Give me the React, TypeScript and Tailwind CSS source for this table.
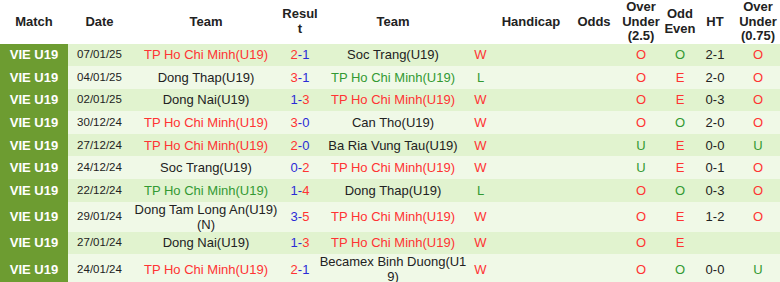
import React from "react";

type Row = {
  date: string;
  home: string;
  away: string;
  hs: number;
  as: number;
  res: "W" | "L";
  ou: string;
  oe: string;
  ht: string;
  ou2: string;
};

const MAIN = "TP Ho Chi Minh(U19)";

const rows: Row[] = [
  { date: "07/01/25", home: MAIN, away: "Soc Trang(U19)", hs: 2, as: 1, res: "W", ou: "O", oe: "O", ht: "2-1", ou2: "O" },
  { date: "04/01/25", home: "Dong Thap(U19)", away: MAIN, hs: 3, as: 1, res: "L", ou: "O", oe: "E", ht: "2-0", ou2: "O" },
  { date: "02/01/25", home: "Dong Nai(U19)", away: MAIN, hs: 1, as: 3, res: "W", ou: "O", oe: "E", ht: "0-3", ou2: "O" },
  { date: "30/12/24", home: MAIN, away: "Can Tho(U19)", hs: 3, as: 0, res: "W", ou: "O", oe: "O", ht: "2-0", ou2: "O" },
  { date: "27/12/24", home: MAIN, away: "Ba Ria Vung Tau(U19)", hs: 2, as: 0, res: "W", ou: "U", oe: "E", ht: "0-0", ou2: "U" },
  { date: "24/12/24", home: "Soc Trang(U19)", away: MAIN, hs: 0, as: 2, res: "W", ou: "U", oe: "E", ht: "0-1", ou2: "O" },
  { date: "22/12/24", home: MAIN, away: "Dong Thap(U19)", hs: 1, as: 4, res: "L", ou: "O", oe: "O", ht: "0-3", ou2: "O" },
  { date: "29/01/24", home: "Dong Tam Long An(U19) (N)", away: MAIN, hs: 3, as: 5, res: "W", ou: "O", oe: "E", ht: "1-2", ou2: "O" },
  { date: "27/01/24", home: "Dong Nai(U19)", away: MAIN, hs: 1, as: 3, res: "W", ou: "O", oe: "E", ht: "", ou2: "" },
  { date: "24/01/24", home: MAIN, away: "Becamex Binh Duong(U19)", hs: 2, as: 1, res: "W", ou: "O", oe: "O", ht: "0-0", ou2: "U" },
];

const RED = "text-[#ff3333]";
const GREEN = "text-[#339933]";
const BLUE = "text-[#2b2bd6]";

// цвет для O/U и E/O
const ouColor = (v: string) => (v === "O" ? RED : GREEN);
const oeColor = (v: string) => (v === "E" ? RED : GREEN);

function teamColor(name: string, res: "W" | "L") {
  if (name !== MAIN) return "text-[#222]";
  return res === "W" ? RED : GREEN;
}

export default function App() {
  return (
    <div className="w-[780px] h-[282px] overflow-hidden bg-white font-['Liberation_Sans',Arial,sans-serif] text-[13px] text-[#222]">
      <table className="w-[784px] table-fixed border-collapse text-center">
        <colgroup>
          <col className="w-[68px]" />
          <col className="w-[63px]" />
          <col className="w-[150px]" />
          <col className="w-[38px]" />
          <col className="w-[148px]" />
          <col className="w-[27px]" />
          <col className="w-[74px]" />
          <col className="w-[52px]" />
          <col className="w-[42px]" />
          <col className="w-[36px]" />
          <col className="w-[34px]" />
          <col className="w-[52px]" />
        </colgroup>
        <thead>
          <tr className="h-[43px] font-bold leading-[14.5px] text-[#222] [&>th]:p-0 [&>th]:align-middle">
            <th>Match</th>
            <th>Date</th>
            <th>Team</th>
            <th className="break-all">Result</th>
            <th>Team</th>
            <th></th>
            <th>Handicap</th>
            <th>Odds</th>
            <th>Over Under (2.5)</th>
            <th>Odd Even</th>
            <th>HT</th>
            <th>
              Over
              <br />
              Under
              <br />
              (0.75)
            </th>
          </tr>
        </thead>
        <tbody>
          {rows.map((r, i) => {
            const hi = r.hs > r.as;
            return (
              <tr
                key={i}
                className={`h-[22.6px] leading-[15px] [&>td]:p-0 [&>td]:align-middle ${i % 2 === 0 ? "bg-[#e1f3cf]" : "bg-[#f0f9e7]"}`}
              >
                <td className="bg-[#6d9c31] font-bold text-white">VIE U19</td>
                <td className="text-[11.5px]">{r.date}</td>
                <td className={teamColor(r.home, r.res)}>{r.home}</td>
                <td>
                  <span className={hi ? RED : BLUE}>{r.hs}</span>
                  <span className={BLUE}>-</span>
                  <span className={hi ? BLUE : RED}>{r.as}</span>
                </td>
                <td className={`break-all ${teamColor(r.away, r.res)}`}>{r.away}</td>
                <td className={r.res === "W" ? RED : GREEN}>{r.res}</td>
                <td></td>
                <td></td>
                <td className={ouColor(r.ou)}>{r.ou}</td>
                <td className={oeColor(r.oe)}>{r.oe}</td>
                <td>{r.ht}</td>
                <td className={ouColor(r.ou2)}>{r.ou2}</td>
              </tr>
            );
          })}
        </tbody>
      </table>
    </div>
  );
}
